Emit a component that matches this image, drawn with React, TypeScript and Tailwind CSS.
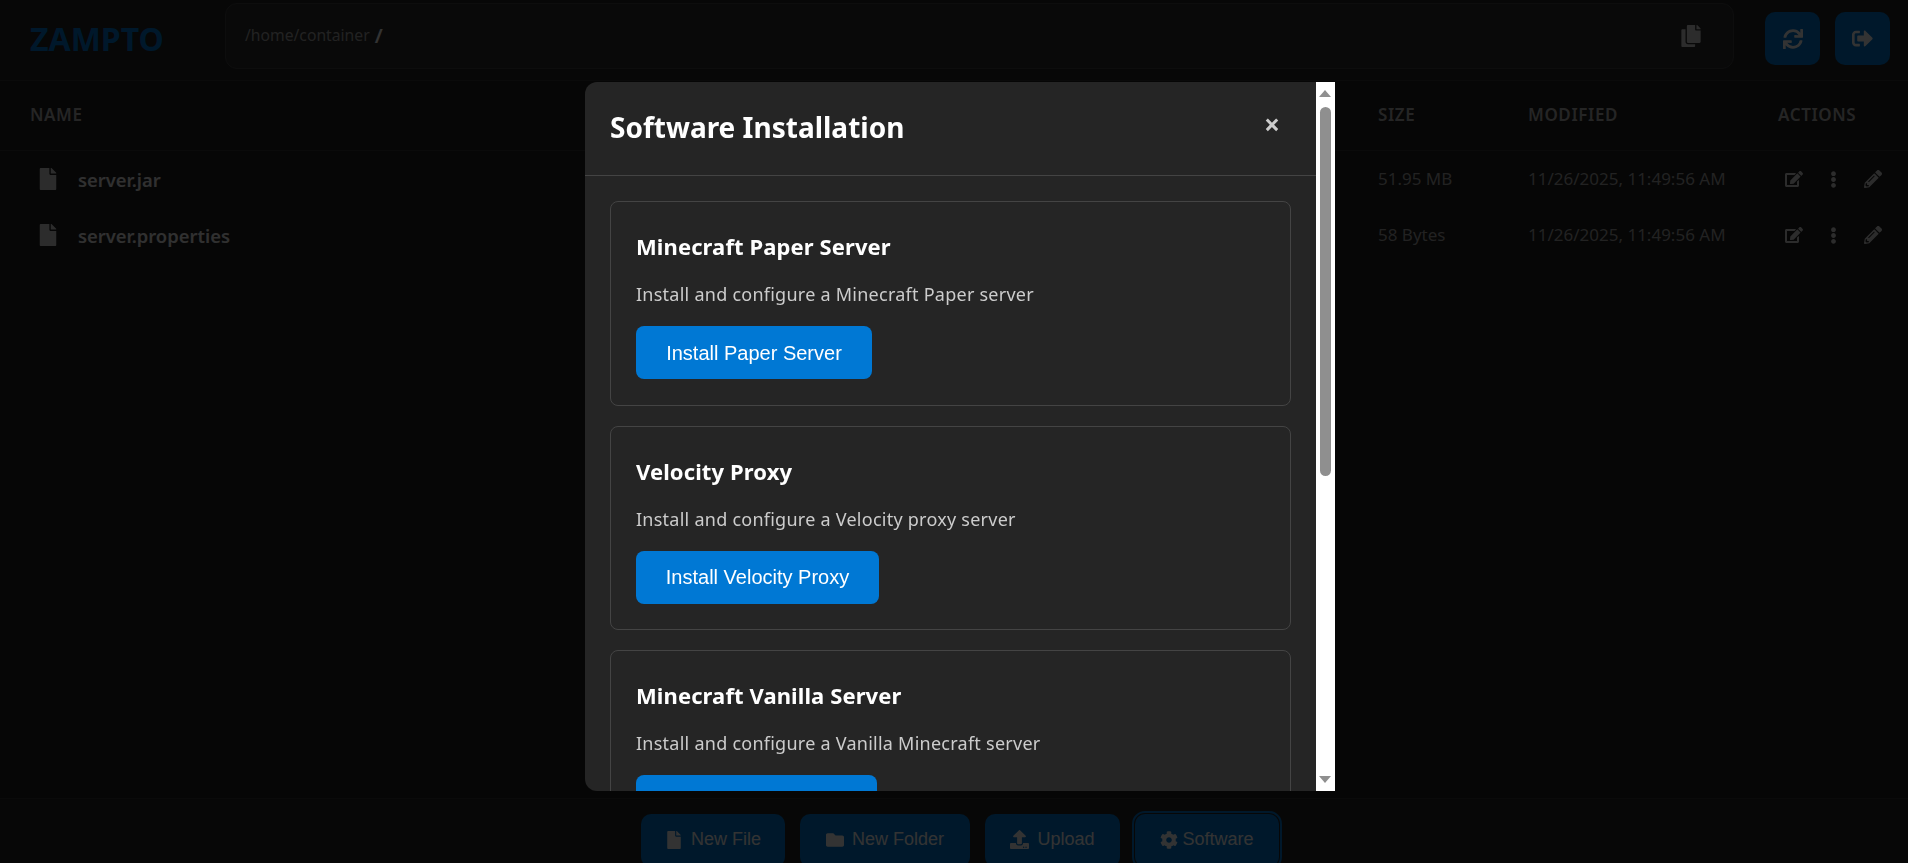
import { FaCog, FaCopy, FaEllipsisV, FaFile, FaFolder, FaPencilAlt, FaSignOutAlt, FaSync, FaEdit, FaUpload } from "react-icons/fa";

const files = [
  { name: "server.jar", size: "51.95 MB", modified: "11/26/2025, 11:49:56 AM" },
  { name: "server.properties", size: "58 Bytes", modified: "11/26/2025, 11:49:56 AM" },
];

const software = [
  { title: "Minecraft Paper Server", desc: "Install and configure a Minecraft Paper server", action: "Install Paper Server", width: "w-[236px]" },
  { title: "Velocity Proxy", desc: "Install and configure a Velocity proxy server", action: "Install Velocity Proxy", width: "w-[243px]" },
  { title: "Minecraft Vanilla Server", desc: "Install and configure a Vanilla Minecraft server", action: "Install Vanilla Server", width: "w-[241px]" },
];

const rowCols = "grid grid-cols-[1348px_150px_250px_1fr]";

const FileManager = () => (
  <div className="flex h-screen flex-col overflow-hidden bg-[#1e1e1e] text-white">
    <header className="flex h-[81px] shrink-0 items-center border-b border-[#333] bg-[#252526] pl-[30px] pr-[18px]">
      <h1 className="mb-[2px] w-[195px] text-[32px] leading-none font-bold text-[#0078d4]">ZAMPTO</h1>
      <div className="mb-[8px] flex h-[66px] w-[1509px] items-center rounded-xl border border-[#444] bg-[#2d2d2d] pr-[31px] pl-[19px]">
        <span className="text-[15.7px] text-[#aaa]">/home/container</span>
        <span className="ml-[5px] text-[20px] leading-none font-semibold text-white">/</span>
        <FaCopy className="ml-auto text-[#ddd]" size={22} />
      </div>
      <div className="mb-[3px] ml-auto flex gap-[15px]">
        <button className="flex h-[53px] w-[55px] items-center justify-center rounded-[10px] bg-[#0078d4] text-white"><FaSync size={20} /></button>
        <button className="flex h-[53px] w-[55px] items-center justify-center rounded-[10px] bg-[#0078d4] text-white"><FaSignOutAlt size={21} /></button>
      </div>
    </header>

    <div className={`${rowCols} h-[70px] shrink-0 items-center border-b border-[#333] pb-[2px] pl-[30px] text-[17px] font-semibold tracking-[0.6px] text-[#bbb]`}>
      <span>NAME</span>
      <span>SIZE</span>
      <span>MODIFIED</span>
      <span>ACTIONS</span>
    </div>

    <div className="flex-1">
      {files.map((file) => (
        <div key={file.name} className={`${rowCols} h-[56px] items-center pl-[30px]`}>
          <div className="flex items-center pl-[7px]">
            <FaFile className="text-[#ddd]" size={22} />
            <span className="mt-[1px] ml-[19px] text-[18.4px] font-semibold text-[#eee]">{file.name}</span>
          </div>
          <span className="text-[17px] text-[#aaa]">{file.size}</span>
          <span className="text-[17px] text-[#aaa]">{file.modified}</span>
          <div className="flex items-center pl-[7px] text-[#ddd]">
            <FaEdit size={18} />
            <FaEllipsisV className="ml-[22px]" size={17} />
            <FaPencilAlt className="ml-[22px]" size={18} />
          </div>
        </div>
      ))}
    </div>

    <footer className="flex h-[65px] shrink-0 gap-[15px] border-t border-[#333] bg-[#252526] pt-[15px] pl-[641px] font-['Liberation_Sans',sans-serif] text-[18px] text-white">
      <button className="flex h-[53px] w-[144px] shrink-0 items-center justify-center gap-[8px] rounded-[10px] bg-[#0078d4] pb-[2px]"><FaFile size={18} />New File</button>
      <button className="flex h-[53px] w-[170px] shrink-0 items-center justify-center gap-[8px] rounded-[10px] bg-[#0078d4] pb-[2px]"><FaFolder size={18} />New Folder</button>
      <button className="flex h-[53px] w-[135px] shrink-0 items-center justify-center gap-[8px] rounded-[10px] bg-[#0078d4] pb-[2px]"><FaUpload size={19} />Upload</button>
      <button className="flex h-[53px] w-[144px] shrink-0 items-center justify-center gap-[4px] rounded-[10px] bg-[#0078d4] pb-[2px] outline-2 outline-offset-1 outline-[#0078d4]"><FaCog size={18} />Software</button>
    </footer>
  </div>
);

const ScrollTrack = () => (
  <div className="relative w-[19px] shrink-0 bg-white">
    <div className="absolute top-[8px] left-[3px] h-0 w-0 border-x-[6px] border-b-[7px] border-x-transparent border-b-[#8f8f8f]" />
    <div className="absolute top-[25px] left-[4px] h-[369px] w-[11px] rounded-full bg-[#8f8f8f]" />
    <div className="absolute bottom-[8px] left-[3px] h-0 w-0 border-x-[6px] border-t-[7px] border-x-transparent border-t-[#8f8f8f]" />
  </div>
);

const SoftwareModal = () => (
  <div className="fixed inset-0 flex items-start justify-center bg-black/80 pt-[82px] pl-[12px]">
    <div className="flex h-[709px] w-[750px] overflow-hidden rounded-l-xl bg-[#252525] text-white">
      <div className="min-w-0 flex-1">
        <div className="flex h-[94px] items-start justify-between border-b border-[#444] pt-[25px] pr-[36px] pl-[25px]">
          <h2 className="text-[28px] leading-[40px] font-bold">Software Installation</h2>
          <button className="text-[28px] leading-[34px] font-bold text-[#ccc]">×</button>
        </div>
        <div className="flex flex-col gap-[20px] pt-[25px] pr-[25px] pl-[25px]">
          {software.map((item) => (
            <div key={item.title} className="h-[204.5px] shrink-0 rounded-lg border border-[#444] pt-[29px] pl-[25px]">
              <h3 className="text-[22px] leading-[30px] font-bold tracking-[0.1px]">{item.title}</h3>
              <p className="mt-[18px] text-[18px] leading-[30px] tracking-[0.25px] text-[#ccc]">{item.desc}</p>
              <button className={`${item.width} mt-[17px] h-[53px] rounded-lg bg-[#0078d4] font-['Liberation_Sans',sans-serif] text-[20px] text-white`}>
                {item.action}
              </button>
            </div>
          ))}
        </div>
      </div>
      <ScrollTrack />
    </div>
  </div>
);

const App = () => (
  <div className="font-['Noto_Sans',sans-serif]">
    <FileManager />
    <SoftwareModal />
  </div>
);

export default App;
